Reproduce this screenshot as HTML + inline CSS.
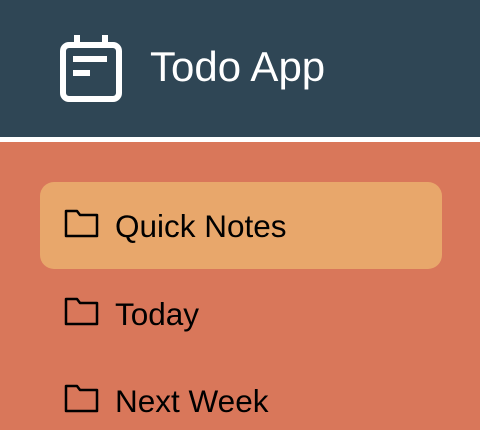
<!DOCTYPE html>
<html><head><style>
body{margin:0;width:480px;height:430px;overflow:hidden;background:#d9775a;font-family:"Liberation Sans",sans-serif;position:relative}
.hdr{position:absolute;left:0;top:0;width:480px;height:137px;background:#2f4655}
.sep{position:absolute;left:0;top:137px;width:480px;height:5px;background:#fff}
.title{position:absolute;left:150px;top:44px;font-size:42px;color:#fff;line-height:46px}
.hl{position:absolute;left:40px;top:182px;width:402px;height:87px;background:#e8a76b;border-radius:14px}
.item{position:absolute;left:115px;font-size:31.5px;color:#000;line-height:36px}
svg{position:absolute}
</style></head><body>
<div class="hdr"></div>
<div class="sep"></div>
<svg style="left:58px;top:33px" width="66" height="70" viewBox="0 0 66 70">
<rect x="5" y="12" width="56" height="54" rx="6" fill="none" stroke="#fff" stroke-width="6"/>
<rect x="16" y="2" width="6" height="12" fill="#fff"/><rect x="44" y="2" width="6" height="12" fill="#fff"/>
<rect x="15" y="23" width="34" height="6" fill="#fff"/><rect x="15" y="37" width="17" height="6" fill="#fff"/>
</svg>
<div class="title">Todo App</div>
<div class="hl"></div>
<svg style="left:64px;top:209px" width="36" height="30" viewBox="0 0 36 30"><path d="M2 2H13L16 6H33V27H2Z" fill="none" stroke="#000" stroke-width="2.5" stroke-linejoin="round"/></svg>
<div class="item" style="top:208px">Quick Notes</div>
<svg style="left:64px;top:297px" width="36" height="30" viewBox="0 0 36 30"><path d="M2 2H13L16 6H33V27H2Z" fill="none" stroke="#000" stroke-width="2.5" stroke-linejoin="round"/></svg>
<div class="item" style="top:296px">Today</div>
<svg style="left:64px;top:384px" width="36" height="30" viewBox="0 0 36 30"><path d="M2 2H13L16 6H33V27H2Z" fill="none" stroke="#000" stroke-width="2.5" stroke-linejoin="round"/></svg>
<div class="item" style="top:383px">Next Week</div>
</body></html>
